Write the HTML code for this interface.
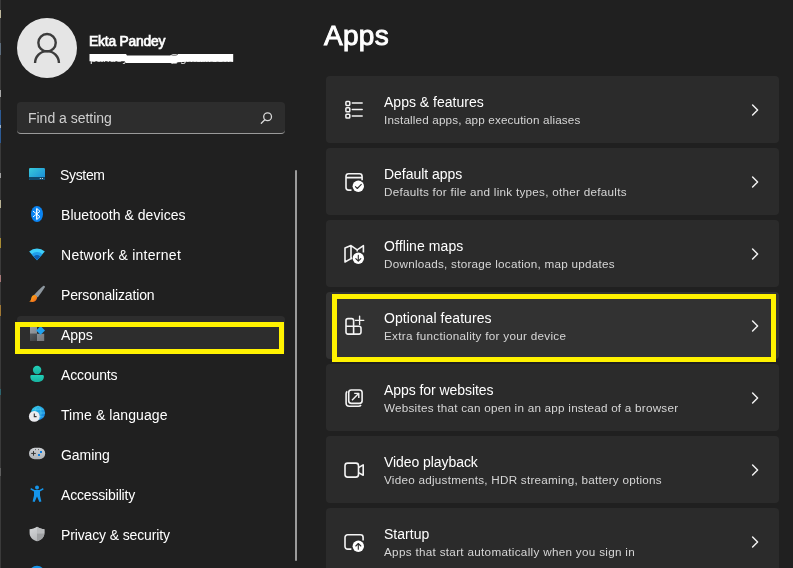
<!DOCTYPE html>
<html lang="en">
<head>
<meta charset="utf-8">
<title>Settings - Apps</title>
<style>
html,body{margin:0;padding:0;}
body{width:793px;height:568px;overflow:hidden;background:#202020;position:relative;
  font-family:"Liberation Sans",sans-serif;color:#fff;}
#root{position:absolute;left:0;top:0;width:793px;height:568px;overflow:hidden;background:#202020;}
.t{position:absolute;white-space:nowrap;margin:0;padding:0;will-change:transform;}
.card{position:absolute;left:326px;width:453px;height:67px;background:#2b2b2b;border-radius:4px;}
.card.hot{background:#323232;}
.search{position:absolute;left:17px;top:102px;width:268px;height:32px;box-sizing:border-box;
  background:#2d2d2d;border-radius:4px;border-bottom:1px solid #9a9a9a;}
.navsel{position:absolute;left:17px;top:316px;width:268px;height:37px;background:#2d2d2d;border-radius:4px;}
.avatar{position:absolute;left:17px;top:18px;width:60px;height:60px;border-radius:50%;background:#e5e5e5;}
.scroll{position:absolute;left:295px;top:170px;width:2px;height:391px;background:#9b9b9b;border-radius:1px;}
.hl{position:absolute;box-sizing:border-box;border:5px solid #fff200;}
svg{position:absolute;left:0;top:0;}
.edge{position:absolute;left:0;top:0;width:1px;height:568px;background:linear-gradient(to bottom,
#3a3a3a 0,#3a3a3a 10px,#bdb79c 10px,#bdb79c 18px,#3a3a3a 18px,#3a3a3a 43px,#5c6c7c 43px,#5c6c7c 55px,#3a3a3a 55px,#3a3a3a 90px,#a8a8a8 90px,#a8a8a8 97px,
#3a3a3a 97px,#3a3a3a 110px,#2c5a94 110px,#2c5a94 125px,#9ab0c8 125px,#9ab0c8 128px,#2c5a94 128px,#2c5a94 143px,#3a3a3a 143px,#3a3a3a 173px,#a0a0a0 173px,#a0a0a0 178px,
#3a3a3a 178px,#3a3a3a 200px,#b8b294 200px,#b8b294 208px,#3a3a3a 208px,#3a3a3a 238px,#a88c34 238px,#a88c34 248px,#3a3a3a 248px,#3a3a3a 275px,#a87878 275px,#a87878 282px,
#3a3a3a 282px,#3a3a3a 305px,#a07834 305px,#a07834 316px,#3a3a3a 316px,#3a3a3a 389px,#2d6670 389px,#2d6670 395px,#3a3a3a 395px,#3a3a3a 468px,#5e5e5e 468px,#5e5e5e 476px,#3a3a3a 476px,#3a3a3a 568px);}
</style>
</head>
<body>
<div id="root">
<div class="edge"></div>
<div class="avatar"></div>
<div class="search"></div>
<div class="navsel"></div>
<div class="scroll"></div>

<div class="card" style="top:76px"></div>
<div class="card" style="top:148px"></div>
<div class="card" style="top:220px"></div>
<div class="card hot" style="top:292px"></div>
<div class="card" style="top:364px"></div>
<div class="card" style="top:436px"></div>
<div class="card" style="top:508px"></div>
<svg width="793" height="568" viewBox="0 0 793 568">
<defs>
<linearGradient id="gsys" x1="0" y1="0" x2="1" y2="1"><stop offset="0" stop-color="#38cbdc"/><stop offset="1" stop-color="#1786d6"/></linearGradient>
<linearGradient id="gbrush" x1="0" y1="0" x2="1" y2="1"><stop offset="0" stop-color="#ffb91a"/><stop offset="1" stop-color="#f2601c"/></linearGradient>
<linearGradient id="gglobe" x1="0" y1="0" x2="1" y2="1"><stop offset="0" stop-color="#2ccbe6"/><stop offset="1" stop-color="#1278e0"/></linearGradient>
<linearGradient id="gacc" x1="0" y1="0" x2="0" y2="1"><stop offset="0" stop-color="#22d0b8"/><stop offset="1" stop-color="#17b09e"/></linearGradient>
<linearGradient id="gshield" x1="0" y1="0" x2="0.6" y2="1"><stop offset="0" stop-color="#d6d8da"/><stop offset="1" stop-color="#b4b6b8"/></linearGradient>
<linearGradient id="gsq1" x1="0" y1="0" x2="1" y2="1"><stop offset="0" stop-color="#9a9fa5"/><stop offset="1" stop-color="#858a90"/></linearGradient>
<linearGradient id="gsq2" x1="0" y1="0" x2="1" y2="1"><stop offset="0" stop-color="#55595d"/><stop offset="1" stop-color="#3c4043"/></linearGradient>
<linearGradient id="gsq3" x1="0" y1="0" x2="1" y2="1"><stop offset="0" stop-color="#8a8e93"/><stop offset="1" stop-color="#74787d"/></linearGradient>
<linearGradient id="gpad" x1="0" y1="0" x2="0" y2="1"><stop offset="0" stop-color="#cdd0d4"/><stop offset="1" stop-color="#aeb2b6"/></linearGradient>
</defs>
<!-- avatar glyph -->
<g fill="none" stroke="#3c3c3c" stroke-width="2.4">
<circle cx="47.05" cy="42.7" r="8.7"/>
<path d="M35.05 63.1 A11.95 11.95 0 0 1 58.95 63.1"/>
</g>
<!-- search icon -->
<g fill="none" stroke="#d8d8d8" stroke-width="1.3" stroke-linecap="round">
<circle cx="267.6" cy="116.8" r="3.9"/>
<path d="M264.8 119.7 L261.3 123.2"/>
</g>
<!-- System -->
<rect x="29" y="168" width="16" height="12" rx="1.2" fill="url(#gsys)"/>
<path d="M29 177 H45 V178.8 A1.2 1.2 0 0 1 43.8 180 H30.2 A1.2 1.2 0 0 1 29 178.8 Z" fill="#10496c"/>
<rect x="39.8" y="178" width="1.1" height="1" fill="#c8d8e4"/><rect x="41.9" y="178" width="1.1" height="1" fill="#c8d8e4"/>
<!-- Bluetooth -->
<ellipse cx="37" cy="214" rx="6" ry="8.1" fill="#0a84f2"/>
<rect x="36.05" y="208.5" width="1.35" height="11" fill="#fff"/>
<path d="M33.3 211.3 L40 216.7 L36.9 219.4 M36.9 208.6 L40 211.3 L33.3 216.7" fill="none" stroke="#fff" stroke-width="0.95" stroke-linejoin="round" stroke-linecap="round"/>
<!-- Network -->
<path d="M37 260.2 L29.2 251.6 A11.6 11.6 0 0 1 44.8 251.6 Z" fill="#3ecffa"/>
<path d="M37 260.2 L31.6 254.2 A8 8 0 0 1 42.4 254.2 Z" fill="#1f9dea"/>
<path d="M37 260.2 L33.8 256.6 A4.7 4.7 0 0 1 40.2 256.6 Z" fill="#0c5fb4"/>
<!-- Personalization brush -->
<path d="M43.1 285.9 C44.4 285.2 45.4 286.3 44.7 287.6 C42.6 291 40.2 294.4 37.7 297.6 L34.2 294.7 C37 291.6 40 288.4 43.1 285.9 Z" fill="#8d979f"/>
<path d="M34.5 295 C36.3 295 37.4 296.5 37 298.2 C36.5 300.5 34.6 301.9 32.4 301.9 C31.1 301.9 30 301.8 29.2 301.5 C30.4 300.9 30.9 300 31.1 298.7 C31.4 296.7 32.7 295 34.5 295 Z" fill="url(#gbrush)"/>
<!-- Apps -->
<rect x="30" y="326.4" width="7" height="7.4" fill="url(#gsq1)"/>
<rect x="30" y="333.8" width="7" height="7.2" fill="url(#gsq2)"/>
<rect x="37" y="333.8" width="7.2" height="7.2" fill="url(#gsq3)"/>
<path d="M40.6 326 L45 330.4 L40.6 334.8 L36.2 330.4 Z" fill="#1fa2f0"/>
<!-- Accounts -->
<circle cx="37.1" cy="370" r="4.2" fill="url(#gacc)"/>
<path d="M30.3 376.4 A1.4 1.4 0 0 1 31.7 375 H42.5 A1.4 1.4 0 0 1 43.9 376.4 C43.9 380 41 382.1 37.1 382.1 C33.2 382.1 30.3 380 30.3 376.4 Z" fill="url(#gacc)"/>
<!-- Time & language -->
<circle cx="38" cy="413" r="7.1" fill="url(#gglobe)"/>
<g fill="none" stroke="#62d6f2" stroke-width="0.7" opacity="0.75">
<ellipse cx="38" cy="413" rx="3" ry="7"/>
<path d="M31 413 H45 M32.4 409.2 H43.6 M32.4 416.8 H43.6"/>
</g>
<circle cx="34.3" cy="416.4" r="5.4" fill="#ebebef"/>
<path d="M34.3 413.4 V416.6 H36.6" fill="none" stroke="#333" stroke-width="1.1"/>
<!-- Gaming -->
<rect x="29" y="447.8" width="16.2" height="11.4" rx="5.7" fill="url(#gpad)"/>
<path d="M31.2 453.4 H35.8 M33.5 451.1 V455.7" stroke="#333" stroke-width="1" fill="none"/>
<rect x="40" y="451" width="2" height="2" fill="#0f7fe2"/><rect x="38" y="454" width="2" height="2" fill="#0f7fe2"/>
<rect x="35" y="449.2" width="0.9" height="0.9" fill="#444"/><rect x="38" y="449.2" width="0.9" height="0.9" fill="#444"/>
<!-- Accessibility -->
<g fill="#1595ea">
<circle cx="37" cy="487.6" r="2"/>
<path d="M31 488 L34.6 490 H39.4 L43 488 L43.6 489.4 L40 491.6 V495.6 L41.4 501.6 L39.4 502.1 L37 496.4 L34.6 502.1 L32.6 501.6 L34 495.6 V491.6 L30.4 489.4 Z"/>
</g>
<!-- Privacy shield -->
<path d="M37 526.8 C39.4 528.4 41.8 529 44.4 529.2 V533 C44.4 537 41.4 540 37 541.2 C32.6 540 29.6 537 29.6 533 V529.2 C32.2 529 34.6 528.4 37 526.8 Z" fill="url(#gshield)"/>
<path d="M37 526.8 C39.4 528.4 41.8 529 44.4 529.2 V533.4 H37 Z" fill="#b9bbbd"/>
<path d="M37 533.4 H44.4 C44.2 537.2 41.4 540 37 541.2 Z" fill="#9fa1a3"/>
<!-- Windows update top -->
<circle cx="37" cy="574" r="8.2" fill="#1595ea"/>

<!-- chevrons -->
<g fill="none" stroke="#f0f0f0" stroke-width="1.5" stroke-linecap="round" stroke-linejoin="round">
<path d="M752.6 105.0 L757.6 110 L752.6 115.0"/>
<path d="M752.6 177.0 L757.6 182 L752.6 187.0"/>
<path d="M752.6 249.0 L757.6 254 L752.6 259.0"/>
<path d="M752.6 321.0 L757.6 326 L752.6 331.0"/>
<path d="M752.6 393.0 L757.6 398 L752.6 403.0"/>
<path d="M752.6 465.0 L757.6 470 L752.6 475.0"/>
<path d="M752.6 537.0 L757.6 542 L752.6 547.0"/>
</g>

<!-- card icons -->
<g fill="none" stroke="#f4f4f4" stroke-width="1.6" stroke-linejoin="round">
<!-- apps & features -->
<rect x="345.9" y="101.5" width="3.9" height="3.9" rx="0.8" stroke-width="1.5"/>
<rect x="345.9" y="107.8" width="3.9" height="3.9" rx="0.8" stroke-width="1.5"/>
<rect x="345.9" y="114.2" width="3.9" height="3.9" rx="0.8" stroke-width="1.5"/>
<path d="M352.3 103 H362.2 M352.3 109.4 H362.2 M352.3 115.9 H362.2" stroke-linecap="round" stroke-width="1.45"/>
<!-- default apps -->
<path d="M351.5 190.1 H348.6 A2.6 2.6 0 0 1 346 187.5 V176.4 A2.6 2.6 0 0 1 348.6 173.8 H359.5 A2.6 2.6 0 0 1 362.1 176.4 V180.2 M346 177.6 H362.1"/>
<!-- offline maps -->
<path d="M352 258.4 L351 258.6 L345 262 V248 L351 245.6 V258.4 M351 245.6 L357.2 249.8 L363.4 245.6 V252.6 M357.2 249.8 V251.6"/>
<!-- optional features -->
<path d="M346 320.6 A2 2 0 0 1 348 318.6 H351.6 A2 2 0 0 1 353.6 320.6 V334.1 H348 A2 2 0 0 1 346 332.1 Z M346 326.3 H359 A2 2 0 0 1 361 328.3 V332.1 A2 2 0 0 1 359 334.1 H353.6"/>
<path d="M355.4 320.3 H363.8 M359.6 316.1 V324.5" stroke-width="1.35" stroke-linecap="round"/>
<!-- apps for websites -->
<rect x="348.7" y="390" width="13.4" height="13.4" rx="2.6"/>
<path d="M347.3 391.3 Q346.1 392.1 346.1 393.8 V402.9 A3.3 3.3 0 0 0 349.4 406.2 H358.4 Q360.2 406.2 361 405"/>
<path d="M352 400.2 L358.6 393.6 M354.2 393.4 H358.8 V398" stroke-width="1.4"/>
<!-- video playback -->
<rect x="345" y="463.1" width="13.5" height="14" rx="2.6"/>
<path d="M358.5 467.6 L363.2 464.9 V475.3 L358.5 472.6"/>
<!-- startup -->
<path d="M351.4 549.1 H347.6 A2.6 2.6 0 0 1 345 546.5 V537.4 A2.6 2.6 0 0 1 347.6 534.8 H360.5 A2.6 2.6 0 0 1 363.1 537.4 V540.6"/>
</g>
<!-- badge circles -->
<g fill="#ffffff">
<circle cx="358.3" cy="186.3" r="5.7"/>
<circle cx="358.3" cy="258.3" r="5.7"/>
<circle cx="358.3" cy="546.3" r="5.7"/>
</g>
<g fill="none" stroke="#2b2b2b" stroke-width="1.1" stroke-linecap="round" stroke-linejoin="round">
<path d="M355.4 186.6 L357.3 188.5 L361.3 184.4"/>
<path d="M358.3 255.4 V261 M355.8 258.6 L358.3 261.1 L360.8 258.6"/>
<path d="M358.3 549.2 V543.6 M355.8 546 L358.3 543.5 L360.8 546"/>
</g>
</svg>
<!-- redacted e-mail -->
<div class="t" style="left:89.8px;top:50.4px;font-size:11.7px;line-height:16px;color:#ececec;">pandey</div>
<div class="t" style="left:167.6px;top:50.4px;font-size:11.7px;line-height:16px;color:#ececec;letter-spacing:0.05px;">@gmail.com</div>
<svg width="793" height="568" viewBox="0 0 793 568">
<path d="M89.5 53.9 H126 L127 55.4 H177 L178 53.9 H233.2 V61.8 H186 L178 62.2 L176 63 H126 L125 61.3 H89.5 Z" fill="#ffffff"/>
</svg>
<div class="hl" style="left:15px;top:322px;width:269px;height:32px;"></div>
<div class="hl" style="left:332px;top:294px;width:444px;height:68px;"></div>

<div class="t" id="t0" style="left:89.37px;top:31.52px;font-size:13.8px;line-height:19px;font-weight:400;color:#ffffff;letter-spacing:-0.177px;-webkit-text-stroke:0.7px #fff;">Ekta Pandey</div>
<div class="t" id="t1" style="left:28.46px;top:108.15px;font-size:14.0px;line-height:20px;font-weight:400;color:#cfcfcf;letter-spacing:-0.019px;">Find a setting</div>
<div class="t" id="t2" style="left:60.26px;top:165.05px;font-size:14.0px;line-height:20px;font-weight:400;color:#ffffff;letter-spacing:-0.330px;">System</div>
<div class="t" id="t3" style="left:60.94px;top:205.05px;font-size:14.0px;line-height:20px;font-weight:400;color:#ffffff;letter-spacing:0.042px;">Bluetooth &amp; devices</div>
<div class="t" id="t4" style="left:60.94px;top:245.05px;font-size:14.0px;line-height:20px;font-weight:400;color:#ffffff;letter-spacing:0.271px;">Network &amp; internet</div>
<div class="t" id="t5" style="left:60.94px;top:285.05px;font-size:14.0px;line-height:20px;font-weight:400;color:#ffffff;letter-spacing:-0.155px;">Personalization</div>
<div class="t" id="t6" style="left:61.30px;top:325.05px;font-size:14.0px;line-height:20px;font-weight:400;color:#ffffff;letter-spacing:-0.034px;">Apps</div>
<div class="t" id="t7" style="left:61.30px;top:365.05px;font-size:14.0px;line-height:20px;font-weight:400;color:#ffffff;letter-spacing:-0.139px;">Accounts</div>
<div class="t" id="t8" style="left:60.73px;top:405.05px;font-size:14.0px;line-height:20px;font-weight:400;color:#ffffff;letter-spacing:0.081px;">Time &amp; language</div>
<div class="t" id="t9" style="left:61.30px;top:445.05px;font-size:14.0px;line-height:20px;font-weight:400;color:#ffffff;letter-spacing:-0.051px;">Gaming</div>
<div class="t" id="t10" style="left:61.30px;top:485.05px;font-size:14.0px;line-height:20px;font-weight:400;color:#ffffff;letter-spacing:-0.167px;">Accessibility</div>
<div class="t" id="t11" style="left:60.94px;top:525.05px;font-size:14.0px;line-height:20px;font-weight:400;color:#ffffff;letter-spacing:-0.138px;">Privacy &amp; security</div>
<div class="t" id="t12" style="left:324.00px;top:16.10px;font-size:28px;line-height:39px;font-weight:400;color:#ffffff;letter-spacing:0.274px;-webkit-text-stroke:0.95px #fff;">Apps</div>
<div class="t" id="t13" style="left:384.40px;top:92.25px;font-size:14.0px;line-height:20px;font-weight:400;color:#ffffff;letter-spacing:0.007px;">Apps &amp; features</div>
<div class="t" id="t14" style="left:383.75px;top:111.65px;font-size:11.7px;line-height:16px;font-weight:400;color:#d6d6d6;letter-spacing:0.146px;">Installed apps, app execution aliases</div>
<div class="t" id="t15" style="left:384.47px;top:164.25px;font-size:14.0px;line-height:20px;font-weight:400;color:#ffffff;letter-spacing:-0.039px;">Default apps</div>
<div class="t" id="t16" style="left:383.90px;top:183.65px;font-size:11.7px;line-height:16px;font-weight:400;color:#d6d6d6;letter-spacing:0.267px;">Defaults for file and link types, other defaults</div>
<div class="t" id="t17" style="left:384.40px;top:236.25px;font-size:14.0px;line-height:20px;font-weight:400;color:#ffffff;letter-spacing:0.094px;">Offline maps</div>
<div class="t" id="t18" style="left:383.90px;top:255.65px;font-size:11.7px;line-height:16px;font-weight:400;color:#d6d6d6;letter-spacing:0.249px;">Downloads, storage location, map updates</div>
<div class="t" id="t19" style="left:384.40px;top:308.25px;font-size:14.0px;line-height:20px;font-weight:400;color:#ffffff;letter-spacing:0.056px;">Optional features</div>
<div class="t" id="t20" style="left:383.90px;top:327.65px;font-size:11.7px;line-height:16px;font-weight:400;color:#d6d6d6;letter-spacing:0.287px;">Extra functionality for your device</div>
<div class="t" id="t21" style="left:384.40px;top:380.25px;font-size:14.0px;line-height:20px;font-weight:400;color:#ffffff;letter-spacing:-0.057px;">Apps for websites</div>
<div class="t" id="t22" style="left:384.40px;top:399.65px;font-size:11.7px;line-height:16px;font-weight:400;color:#d6d6d6;letter-spacing:0.236px;">Websites that can open in an app instead of a browser</div>
<div class="t" id="t23" style="left:384.40px;top:452.25px;font-size:14.0px;line-height:20px;font-weight:400;color:#ffffff;letter-spacing:-0.065px;">Video playback</div>
<div class="t" id="t24" style="left:384.40px;top:471.65px;font-size:11.7px;line-height:16px;font-weight:400;color:#d6d6d6;letter-spacing:0.254px;">Video adjustments, HDR streaming, battery options</div>
<div class="t" id="t25" style="left:384.40px;top:524.25px;font-size:14.0px;line-height:20px;font-weight:400;color:#ffffff;letter-spacing:0.025px;">Startup</div>
<div class="t" id="t26" style="left:384.40px;top:543.65px;font-size:11.7px;line-height:16px;font-weight:400;color:#d6d6d6;letter-spacing:0.303px;">Apps that start automatically when you sign in</div>
</div>
</body>
</html>
